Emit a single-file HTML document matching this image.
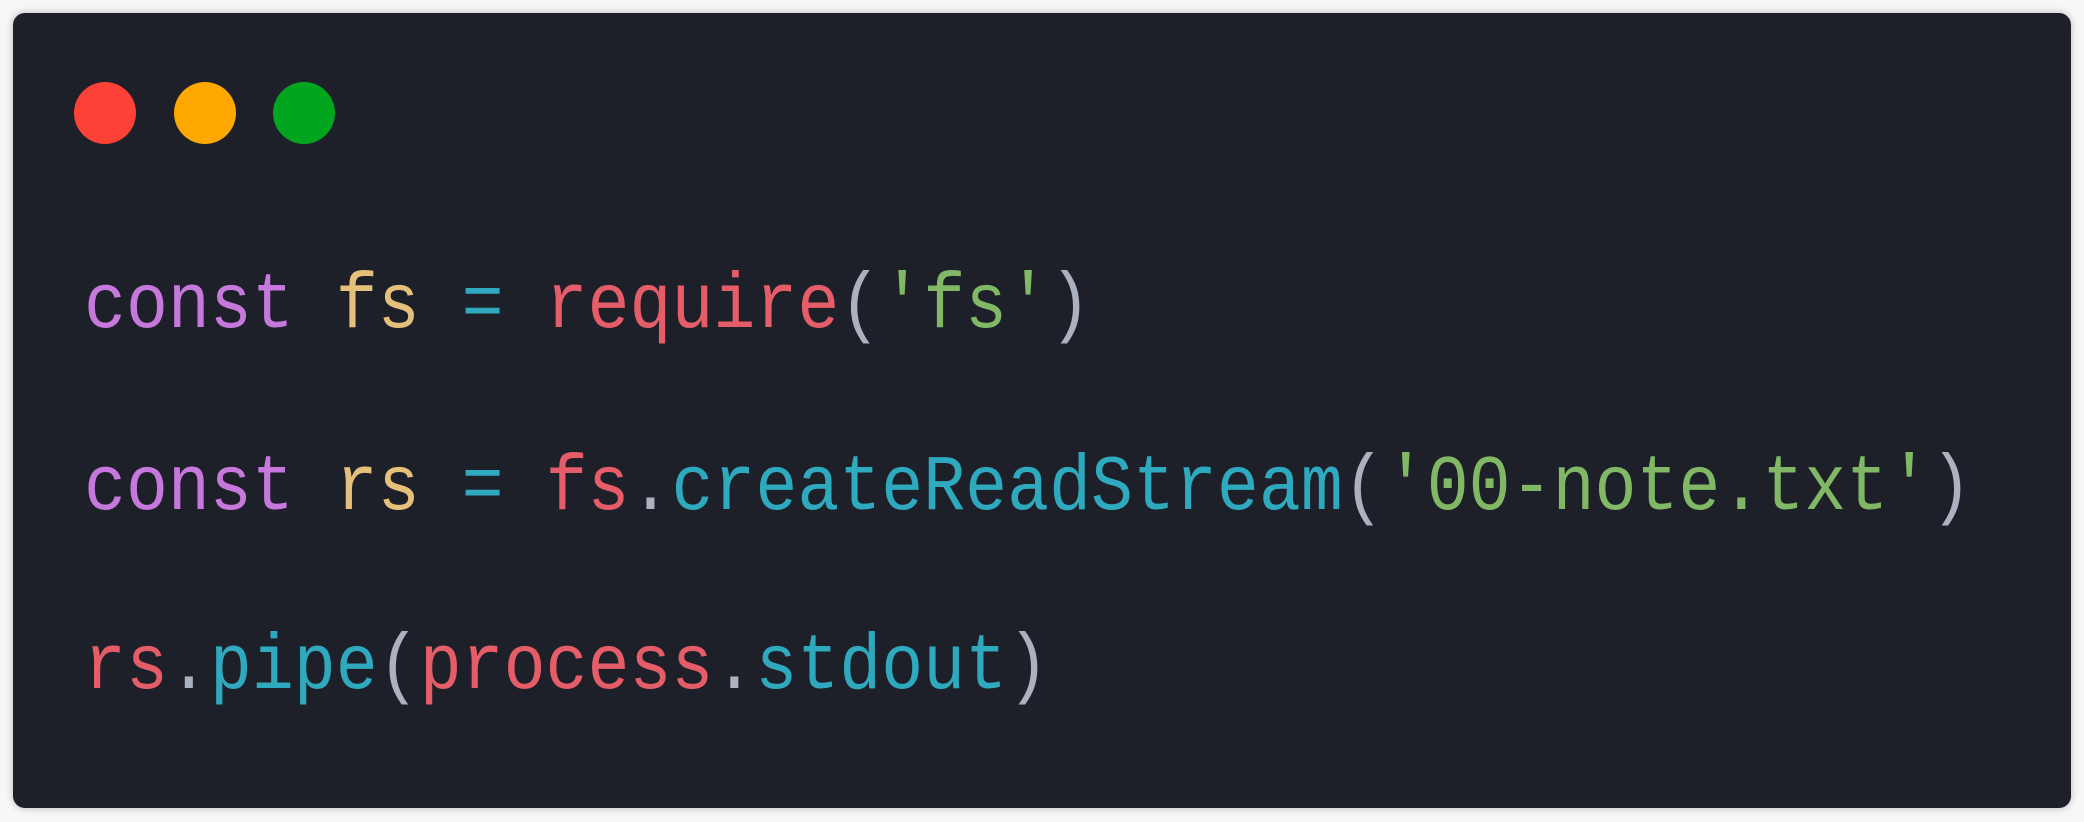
<!DOCTYPE html>
<html><head><style>
html,body{margin:0;padding:0;width:2084px;height:822px;background:#f7f7f7;overflow:hidden}
.card{position:absolute;left:13px;top:13px;width:2058px;height:795px;background:#1e2029;border-radius:12px;box-shadow:0 0 8px rgba(0,0,0,0.25)}
.dot{position:absolute;top:69px;width:62px;height:62px;border-radius:50%}
pre{position:absolute;left:71px;margin:0;font-family:"Liberation Mono",monospace;font-size:79px;line-height:1;color:#abb2bf;transform:scaleX(0.885);transform-origin:0 0}
.k{color:#c678dd}.v{color:#e5c07b}.o{color:#2ea9bd}.r{color:#e45d68}.s{color:#80b865}.p{color:#abb2bf}
</style></head><body>
<div class="card">
<div class="dot" style="left:61px;background:#fe4136"></div>
<div class="dot" style="left:161px;background:#fea801"></div>
<div class="dot" style="left:260px;background:#02a61e"></div>
<pre style="top:254px"><span class="k">const</span> <span class="v">fs</span> <span class="o">=</span> <span class="r">require</span><span class="p">(</span><span class="s">'fs'</span><span class="p">)</span></pre>
<pre style="top:436px"><span class="k">const</span> <span class="v">rs</span> <span class="o">=</span> <span class="r">fs</span><span class="p">.</span><span class="o">createReadStream</span><span class="p">(</span><span class="s">'00-note.txt'</span><span class="p">)</span></pre>
<pre style="top:615px"><span class="r">rs</span><span class="p">.</span><span class="o">pipe</span><span class="p">(</span><span class="r">process</span><span class="p">.</span><span class="o">stdout</span><span class="p">)</span></pre>
</div>
</body></html>
